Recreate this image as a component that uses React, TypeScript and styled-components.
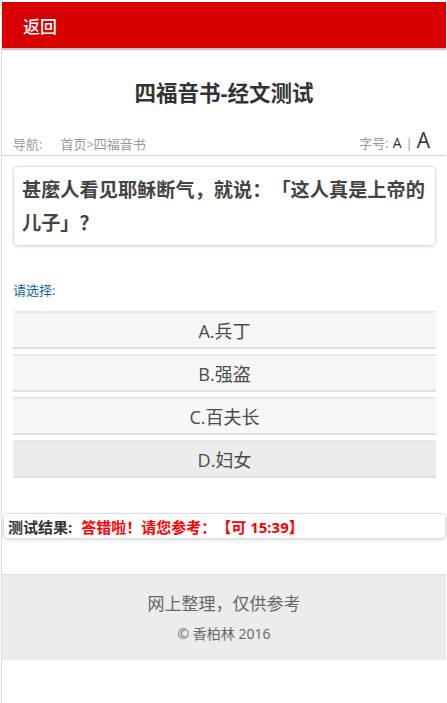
import React from "react";
import styled, { createGlobalStyle } from "styled-components";

const Global = createGlobalStyle`
  html, body { margin: 0; padding: 0; background: #fff; }
  body {
    font-family: "Open Sans", "Noto Sans CJK SC", sans-serif;
    color: #333;
    text-spacing-trim: space-all;
  }
`;

const Page = styled.div`
  padding: 2px 1px 0 1px;
  min-height: 701px;
  display: flex;
  flex-direction: column;
`;

const Header = styled.header`
  margin-left: 1px;
  height: 46px;
  background: #d90000;
  box-shadow: 0 2px 1px #c4c4c4;
  display: flex;
  align-items: center;
  padding-left: 21px;
  position: relative;
  z-index: 1;
`;

const Back = styled.span`
  color: #fff;
  font-size: 17px;
  font-weight: 500;
`;

const Main = styled.main`
  flex: 1;
  border-left: 1px solid #dcdcdc;
  display: flex;
  flex-direction: column;
`;

const Title = styled.h1`
  margin: 0;
  padding-top: 30px;
  height: 48px;
  text-align: center;
  font-size: 21.5px;
  font-weight: 700;
  color: #333;
  line-height: 30px;
`;

const Nav = styled.div`
  display: flex;
  align-items: flex-end;
  justify-content: space-between;
  padding: 0 16px 2px 11px;
  height: 30px;
  box-sizing: border-box;
  border-bottom: 1px solid #d6d6d6;
  font-size: 13px;
  color: #999;
`;

const Crumb = styled.div`
  display: flex;
  gap: 18px;
`;

const FontSize = styled.div`
  display: flex;
  align-items: baseline;
  gap: 4px;
`;

const FontBtn = styled.span<{ $big?: boolean }>`
  color: #333;
  font-size: ${(p) => (p.$big ? "21px" : "14px")};
  line-height: 20px;
`;

const Card = styled.div`
  margin: 10px 10px 0 11px;
  border: 1px solid #dedede;
  border-radius: 5px;
  box-shadow: 0 1px 3px rgba(0, 0, 0, 0.12);
  padding: 6px 8px 6px 8px;
  font-size: 19.2px;
  font-weight: 700;
  color: #444;
  line-height: 33px;
`;

const Prompt = styled.div`
  margin: 35px 0 0 11px;
  font-size: 13px;
  color: #0e6aa3;
  line-height: 18px;
`;

const Options = styled.div`
  margin: 12px 10px 0 11px;
  display: flex;
  flex-direction: column;
  gap: 5px;
`;

const Option = styled.div<{ $active?: boolean }>`
  height: 34px;
  border-top: 2px solid #e8e8e8;
  border-bottom: 2px solid #e0e0e0;
  background: ${(p) => (p.$active ? "#ececec" : "#f7f7f7")};
  display: flex;
  align-items: center;
  justify-content: center;
  font-size: 18px;
  color: #4a4a4a;
`;

const Result = styled.div`
  margin: 35px 0 0 1px;
  border: 1px solid #dedede;
  border-radius: 5px;
  box-shadow: 0 1px 3px rgba(0, 0, 0, 0.15);
  height: 24px;
  display: flex;
  align-items: center;
  padding-left: 4px;
  font-size: 15px;
  font-weight: 700;
  color: #333;
`;

const Label = styled.span`
  margin-right: 9px;
`;

const Wrong = styled.span`
  color: #f00;
`;

const Footer = styled.footer`
  margin-top: 35px;
  border-top: 1px solid #dcdcdc;
  background: #ececec;
  height: 86px;
  display: flex;
  flex-direction: column;
  align-items: center;
  padding-top: 17px;
  box-sizing: border-box;
  color: #666;
`;

const Note = styled.div`
  font-size: 17px;
  line-height: 24px;
`;

const Copy = styled.div`
  margin-top: 8px;
  font-size: 14px;
  line-height: 20px;
`;

export default function App() {
  const options = ["A.兵丁", "B.强盗", "C.百夫长", "D.妇女"];
  return (
    <>
      <Global />
      <Page>
        <Header>
          <Back>返回</Back>
        </Header>
        <Main>
          <Title>四福音书-经文测试</Title>
          <Nav>
            <Crumb>
              <span>导航:</span>
              <span>首页&gt;四福音书</span>
            </Crumb>
            <FontSize>
              <span>字号:</span>
              <FontBtn>A</FontBtn>
              <span>|</span>
              <FontBtn $big>A</FontBtn>
            </FontSize>
          </Nav>
          <Card>甚麼人看见耶稣断气，就说：「这人真是上帝的儿子」？</Card>
          <Prompt>请选择:</Prompt>
          <Options>
            {options.map((o, i) => (
              <Option key={o} $active={i === 3}>
                {o}
              </Option>
            ))}
          </Options>
          <Result>
            <Label>测试结果:</Label>
            <Wrong>答错啦！请您参考：【可 15:39】</Wrong>
          </Result>
          <Footer>
            <Note>网上整理，仅供参考</Note>
            <Copy>© 香柏林 2016</Copy>
          </Footer>
        </Main>
      </Page>
    </>
  );
}
